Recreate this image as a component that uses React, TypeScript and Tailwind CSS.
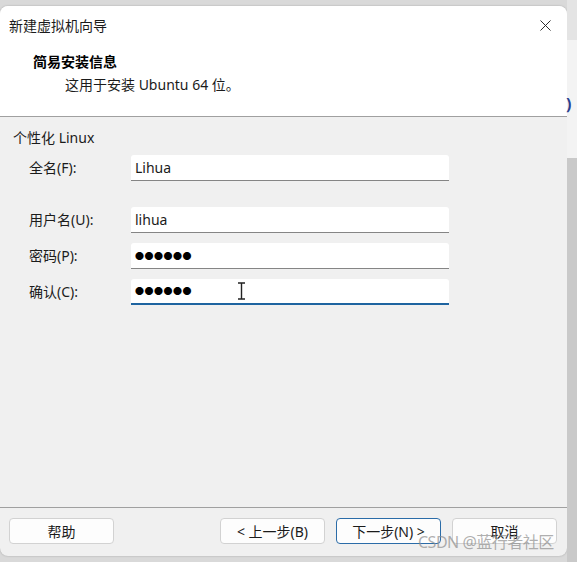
import { X } from 'lucide-react';

// ============================================================================
// DATA
// ============================================================================

const fields = [
  { label: '全名(F):', value: 'Lihua', top: 'mt-[8px]', password: false },
  { label: '用户名(U):', value: 'lihua', top: 'mt-[26px]', password: false },
  { label: '密码(P):', value: '●●●●●●', top: 'mt-[10px]', password: true },
  { label: '确认(C):', value: '●●●●●●', top: 'mt-[10px]', password: true, active: true },
];

const buttons = [
  { label: '< 上一步(B)', primary: false },
  { label: '下一步(N) >', primary: true },
  { label: '取消', primary: false },
];

const font = 'font-["Noto_Sans","Noto_Sans_CJK_SC",sans-serif]';

// ============================================================================
// COMPONENTS
// ============================================================================

function Field({
  label,
  value,
  top,
  password,
  active,
}: {
  label: string;
  value: string;
  top: string;
  password: boolean;
  active?: boolean;
}) {
  return (
    <div className={`flex items-center ${top}`}>
      <span className="w-[131px] pl-[29px] pb-[2px] text-[14px] text-[#1b1b1b]">{label}</span>
      <div
        className={`relative flex h-[26px] w-[318px] items-center rounded-t-[3px] bg-white pl-[4px] ${
          active ? 'border-b-2 border-[#1e64a0]' : 'border-b border-[#858585]'
        }`}
      >
        {password ? (
          <span className="text-[9px] tracking-[0.5px] text-black">{value}</span>
        ) : (
          <span className="text-[14px] text-[#1b1b1b]">{value}</span>
        )}
        {active && (
          <svg className="absolute left-[106px] top-[3px]" width="9" height="18" viewBox="0 0 9 18">
            <path d="M1 1h7M4.5 1v16M1 17h7" stroke="#222" strokeWidth="1.4" fill="none" />
          </svg>
        )}
      </div>
    </div>
  );
}

export default function App() {
  return (
    <div className={`flex h-[562px] w-[577px] bg-[#d9d9d9] ${font}`}>
      {/* dialog */}
      <div className="mt-[6px] flex h-[550px] w-[567px] flex-col overflow-hidden rounded-[8px] bg-[#f0f0f0] shadow-[0_0_2px_rgba(0,0,0,0.25)]">
        {/* header */}
        <div className="h-[111px] border-b border-[#a0a0a0] bg-white">
          <div className="flex h-[38px] items-center justify-between pl-[9px] pr-[12px]">
            <span className="text-[14px] text-[#1b1b1b]">新建虚拟机向导</span>
            <X className="h-[19px] w-[19px] text-[#222]" strokeWidth={1.2} />
          </div>
          <div className="pl-[33px] pt-[8px] text-[14px] font-bold leading-[20px] text-black">简易安装信息</div>
          <div className="pl-[65px] pt-[3px] text-[14px] leading-[20px] text-[#1b1b1b]">这用于安装 Ubuntu 64 位。</div>
        </div>

        {/* body */}
        <div className="flex flex-1 flex-col pt-[12px]">
          <span className="pl-[13px] text-[14px] leading-[18px] text-[#1b1b1b]">个性化 Linux</span>
          {fields.map((f) => (
            <Field key={f.label} {...f} />
          ))}
        </div>

        {/* footer */}
        <div className="relative flex h-[49px] items-center border-t border-[#a0a0a0] px-[9px] pb-[2px]">
          <button className="h-[26px] w-[105px] rounded-[4px] border border-[#d2d2d2] bg-[#fdfdfd] text-[14px] text-[#1b1b1b]">
            帮助
          </button>
          <div className="ml-auto flex gap-[11px] pr-[1px]">
            {buttons.map((b) => (
              <button
                key={b.label}
                className={`h-[26px] w-[105px] rounded-[4px] border bg-[#fdfdfd] text-[14px] text-[#1b1b1b] ${
                  b.primary ? 'border-[#2b6ca8]' : 'border-[#d2d2d2]'
                }`}
              >
                {b.label}
              </button>
            ))}
          </div>
          <span className="pointer-events-none absolute left-[418px] top-[22px] text-[16px] tracking-[-0.5px] text-[#8c8c8c]/70">
            CSDN @蓝行者社区
          </span>
        </div>
      </div>

      {/* background window edge */}
      <div className="flex w-[10px] flex-col">
        <div className="h-[40px] bg-[#e4e4e4]" />
        <div className="relative h-[118px] bg-[#f3f3f3]">
          <span className="absolute left-[-1px] top-[52px] text-[16px] font-bold text-[#2a3f8f]">)</span>
        </div>
        <div className="flex-1 bg-[#c9c9c9]" />
      </div>
    </div>
  );
}
